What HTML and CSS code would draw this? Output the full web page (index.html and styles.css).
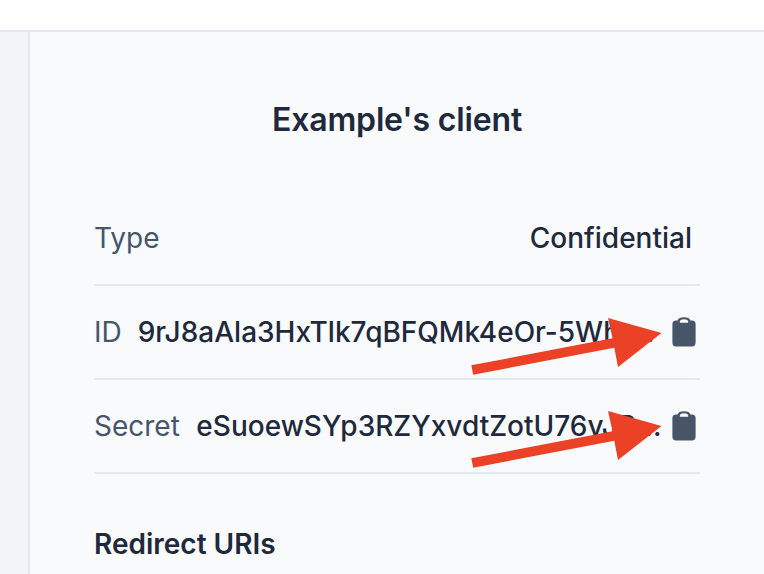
FILE: index.html
```html
<!DOCTYPE html>
<html lang="en">
<head>
<meta charset="utf-8">
<title>Example's client</title>
<link rel="stylesheet" href="styles.css">
</head>
<body>
<header class="topbar"></header>
<div class="layout">
  <aside class="sidebar"></aside>
  <main class="panel">
    <h1 class="title">Example's client</h1>
    <dl class="details">
      <div class="row">
        <dt class="label">Type</dt>
        <dd class="value value-end">Confidential</dd>
      </div>
      <div class="row">
        <dt class="label">ID</dt>
        <dd class="value value-id">9rJ8aAla3HxTlk7qBFQMk4eOr-5Whr...</dd>
        <svg class="clipboard" viewBox="0 0 24 30"><path fill-rule="evenodd" d="M5.600 3.600C6.200 1.300 8.400.3 12 .3s5.800 1 6.400 3.300H20A3.600 3.600 0 0 1 23.600 7.200V25.800A3.600 3.600 0 0 1 20 29.400H4A3.600 3.600 0 0 1 .4 25.800V7.200A3.600 3.600 0 0 1 4 3.600ZM7.800 5.800H16.200V4.500Q15.600 2.300 12 2.300T7.800 4.500Z"/></svg>
        <svg class="arrow" viewBox="0 0 192 60"><path d="M.3 49.300 141.500 22.300 137 2 190.500 17 147 51 143.300 31.700 2.200 58.700Z"/></svg>
      </div>
      <div class="row">
        <dt class="label">Secret</dt>
        <dd class="value value-secret">eSuoewSYp3RZYxvdtZotU76vJR...</dd>
        <svg class="clipboard" viewBox="0 0 24 30"><path fill-rule="evenodd" d="M5.600 3.600C6.200 1.300 8.400.3 12 .3s5.800 1 6.400 3.300H20A3.600 3.600 0 0 1 23.600 7.200V25.800A3.600 3.600 0 0 1 20 29.400H4A3.600 3.600 0 0 1 .4 25.800V7.200A3.600 3.600 0 0 1 4 3.600ZM7.800 5.800H16.200V4.500Q15.600 2.300 12 2.300T7.800 4.500Z"/></svg>
        <svg class="arrow arrow-secret" viewBox="0 0 192 60"><path d="M.3 49.300 141.500 22.300 137 2 190.500 17 147 51 143.300 31.700 2.200 58.700Z"/></svg>
      </div>
    </dl>
    <h2 class="subtitle">Redirect URIs</h2>
  </main>
</div>
</body>
</html>
```

FILE: styles.css
```css
* { box-sizing: border-box; }
body { margin: 0; height: 574px; overflow: hidden; background: #f8fafc; color: #1e293b; font: 28px/40px Inter, sans-serif; }
.topbar { height: 32px; background: #fff; border-bottom: 2px solid #e2e8f0; }
.layout { display: flex; height: 542px; }
.sidebar { width: 30px; background: #f1f5f9; border-right: 2px solid #e2e8f0; }
.panel { width: 734px; padding: 64px 64px 0; }
.title { margin: 0; padding-top: 4px; font-size: 32px; line-height: 40px; font-weight: 600; letter-spacing: -0.15px; text-align: center; }
.details { width: 606px; margin: 52px 0 0; }
.row { position: relative; display: flex; align-items: center; height: 94px; border-bottom: 2px solid #e2e8f0; }
.label { color: #475569; font-weight: 400; }
.value { margin: 0; font-weight: 500; white-space: nowrap; }
.value-end { margin-left: auto; padding-right: 8px; }
.value-id, .value-secret { margin-left: 16px; }
.value-secret { margin-left: 16.5px; }
.clipboard { flex: none; width: 24px; height: 30px; margin-left: auto; margin-right: 4px; fill: #475569; }
.arrow { position: absolute; left: 377px; top: 30px; width: 192px; height: 60px; fill: #eb4126; }
.arrow-secret { top: 29px; }
.subtitle { margin: 50px 0 0; font-size: 28px; line-height: 40px; font-weight: 600; }
```
